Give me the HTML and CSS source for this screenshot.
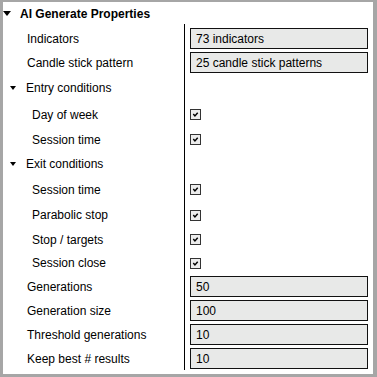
FILE: index.html
```html
<!DOCTYPE html>
<html>
<head>
<meta charset="utf-8">
<link rel="stylesheet" href="styles.css">
</head>
<body>
<div class="panel">
  <div class="header"><span class="tri big"></span><span class="htext">AI Generate Properties</span></div>
  <div class="rows">
    <div class="row first"><div class="lab">Indicators</div><div class="val"><div class="box">73 indicators</div></div></div>
    <div class="row"><div class="lab">Candle stick pattern</div><div class="val"><div class="box">25 candle stick patterns</div></div></div>
    <div class="row h27"><div class="lab sec"><span class="tri"></span>Entry conditions</div><div class="val"></div></div>
    <div class="row h26"><div class="lab sub">Day of week</div><div class="val"><span class="cb"><svg width="11" height="11" viewBox="0 0 11 11"><path d="M2.8 5 L4.8 7.3 L8.2 3.4" fill="none" stroke="#000" stroke-width="1.8"/></svg></span></div></div>
    <div class="row"><div class="lab sub">Session time</div><div class="val"><span class="cb"><svg width="11" height="11" viewBox="0 0 11 11"><path d="M2.8 5 L4.8 7.3 L8.2 3.4" fill="none" stroke="#000" stroke-width="1.8"/></svg></span></div></div>
    <div class="row h25"><div class="lab sec"><span class="tri"></span>Exit conditions</div><div class="val"></div></div>
    <div class="row h26"><div class="lab sub">Session time</div><div class="val"><span class="cb"><svg width="11" height="11" viewBox="0 0 11 11"><path d="M2.8 5 L4.8 7.3 L8.2 3.4" fill="none" stroke="#000" stroke-width="1.8"/></svg></span></div></div>
    <div class="row h25"><div class="lab sub">Parabolic stop</div><div class="val"><span class="cb"><svg width="11" height="11" viewBox="0 0 11 11"><path d="M2.8 5 L4.8 7.3 L8.2 3.4" fill="none" stroke="#000" stroke-width="1.8"/></svg></span></div></div>
    <div class="row"><div class="lab sub">Stop / targets</div><div class="val"><span class="cb"><svg width="11" height="11" viewBox="0 0 11 11"><path d="M2.8 5 L4.8 7.3 L8.2 3.4" fill="none" stroke="#000" stroke-width="1.8"/></svg></span></div></div>
    <div class="row h23"><div class="lab sub">Session close</div><div class="val"><span class="cb"><svg width="11" height="11" viewBox="0 0 11 11"><path d="M2.8 5 L4.8 7.3 L8.2 3.4" fill="none" stroke="#000" stroke-width="1.8"/></svg></span></div></div>
    <div class="row"><div class="lab">Generations</div><div class="val"><div class="box">50</div></div></div>
    <div class="row"><div class="lab">Generation size</div><div class="val"><div class="box">100</div></div></div>
    <div class="row"><div class="lab">Threshold generations</div><div class="val"><div class="box">10</div></div></div>
    <div class="row"><div class="lab">Keep best # results</div><div class="val"><div class="box">10</div></div></div>
  </div>
</div>
</body>
</html>
```
FILE: styles.css
```css
html, body {
  margin: 0;
  padding: 0;
  background: #ffffff;
}
.panel {
  width: 377px;
  height: 377px;
  box-sizing: border-box;
  border-style: solid;
  border-color: #a6a6a6;
  border-width: 2px 4px 3px 3px;
  background: #ffffff;
  font-family: "Liberation Sans", Arial, sans-serif;
  font-size: 12px;
  color: #000;
  padding-bottom: 4px;
}
.header {
  height: 22px;
  display: flex;
  align-items: center;
  padding-top: 1px;
  box-sizing: border-box;
  font-weight: bold;
}
.tri {
  width: 0;
  height: 0;
  border-left: 3.5px solid transparent;
  border-right: 3.5px solid transparent;
  border-top: 4px solid #000;
  display: inline-block;
}
.tri.big {
  border-left-width: 4px;
  border-right-width: 4px;
  border-top-width: 5px;
  margin-left: 0;
  margin-right: 9px;
}
.rows {
  display: flex;
  flex-direction: column;
}
.row {
  display: grid;
  grid-template-columns: 181px 1fr;
  height: 24px;
}
.row.first { height: 26px; }
.row.h27 { height: 27px; }
.row.h26 { height: 26px; }
.row.h25 { height: 25px; }
.row.h23 { height: 23px; }
.lab {
  display: flex;
  align-items: center;
  padding-left: 24px;
  padding-top: 1px;
  white-space: nowrap;
}
.row.first .lab { padding-top: 3px; }
.lab.sub { padding-left: 29px; }
.lab.sec { padding-left: 7px; }
.lab.sec .tri { margin-right: 10px; }
.val {
  border-left: 1px solid #000;
  display: flex;
  align-items: center;
  padding: 1px 5px 0 5px;
}
.row.first .val { padding-top: 3px; }
.box {
  flex: 1;
  height: 21px;
  box-sizing: border-box;
  border: 1px solid #111;
  background: #e8e9e8;
  display: flex;
  align-items: center;
  padding-left: 5px;
  white-space: nowrap;
}
.cb {
  width: 11px;
  height: 11px;
  box-sizing: border-box;
  border: 1px solid #333;
  background: #ececec;
  display: flex;
  align-items: center;
  justify-content: center;
}
.cb svg { display: block; width: 9px; height: 9px; }
```
